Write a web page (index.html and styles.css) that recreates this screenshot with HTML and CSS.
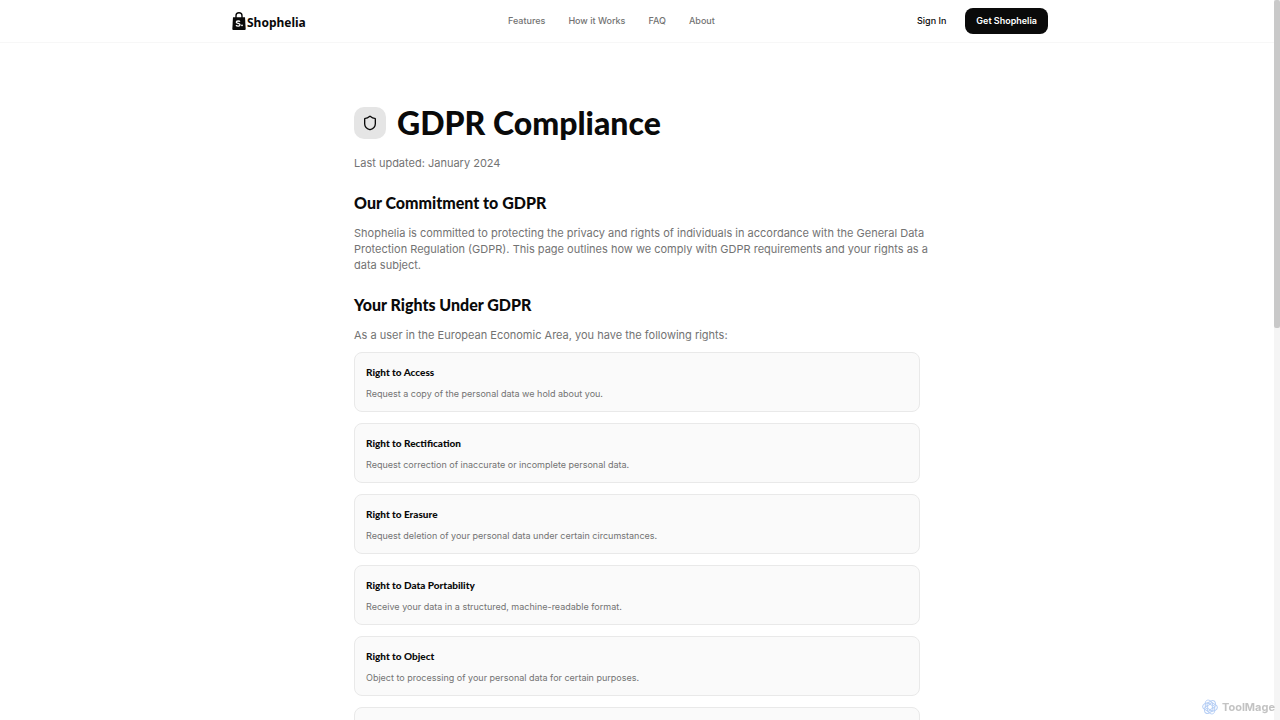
FILE: index.html
```html
<!DOCTYPE html>
<html lang="en">
<head>
<meta charset="utf-8">
<title>GDPR Compliance - Shophelia</title>
<meta name="viewport" content="width=device-width, initial-scale=1">
<link rel="stylesheet" href="styles.css">
</head>
<body>
<header class="header">
  <div class="header-inner">
    <a class="logo" href="#">
      <svg class="logo-mark" viewBox="0 0 14 19" aria-hidden="true">
        <path d="M4 6V3.8a3 3 0 0 1 6 0V6" fill="none" stroke="#0a0a0a" stroke-width="1.4"/>
        <path d="M1 5.2h12L13.700 17a1 1 0 0 1-1 1H1.300a1 1 0 0 1-1-1z" fill="#0a0a0a"/>
        <path d="M8 9.6C7.4 8.9 4.3 8.5 4.3 10.2c0 1.6 3.7.8 3.7 2.6 0 1.7-3.2 1.4-4 .5" fill="none" stroke="#fff" stroke-width="1.3"/>
        <circle cx="10" cy="13.3" r=".9" fill="#fff"/>
      </svg>
      <span>Shophelia</span>
    </a>
    <nav class="nav">
      <a href="#">Features</a>
      <a href="#">How it Works</a>
      <a href="#">FAQ</a>
      <a href="#">About</a>
    </nav>
    <div class="actions">
      <a class="sign-in" href="#">Sign In</a>
      <button class="cta" type="button">Get Shophelia</button>
    </div>
  </div>
</header>
<div class="page">
<main class="content">
  <div class="title-row">
    <span class="title-icon">
      <svg viewBox="0 0 24 24" aria-hidden="true"><path d="M20 13c0 5-3.5 7.5-7.66 8.95a1 1 0 0 1-.67-.01C7.5 20.5 4 18 4 13V6a1 1 0 0 1 1-1c2 0 4.500-1.200 6.240-2.720a1.170 1.170 0 0 1 1.520 0C14.510 3.810 17 5 19 5a1 1 0 0 1 1 1z"/></svg>
    </span>
    <h1>GDPR Compliance</h1>
  </div>
  <p class="updated">Last updated: January 2024</p>
  <section class="section">
    <h2>Our Commitment to GDPR</h2>
    <p class="lead">Shophelia is committed to protecting the privacy and rights of individuals in accordance with the General Data Protection Regulation (GDPR). This page outlines how we comply with GDPR requirements and your rights as a data subject.</p>
  </section>
  <section class="section">
    <h2>Your Rights Under GDPR</h2>
    <p>As a user in the European Economic Area, you have the following rights:</p>
    <div class="cards">
      <article class="card"><h3>Right to Access</h3><p>Request a copy of the personal data we hold about you.</p></article>
      <article class="card"><h3>Right to Rectification</h3><p>Request correction of inaccurate or incomplete personal data.</p></article>
      <article class="card"><h3>Right to Erasure</h3><p>Request deletion of your personal data under certain circumstances.</p></article>
      <article class="card"><h3>Right to Data Portability</h3><p>Receive your data in a structured, machine-readable format.</p></article>
      <article class="card"><h3>Right to Object</h3><p>Object to processing of your personal data for certain purposes.</p></article>
      <article class="card"></article>
    </div>
  </section>
</main>
</div>
<div class="scrollbar"><div class="thumb"></div></div>
<div class="badge">
  <svg viewBox="0 0 24 24" fill="none" stroke="#b7cff5" stroke-width="1.500" aria-hidden="true">
    <path id="petal" d="M12 8 15.500 10V5.500L12 2.500C9 .5 5 2 5 6v7l4 2.300"/>
    <use href="#petal" transform="rotate(60 12 12)"/>
    <use href="#petal" transform="rotate(120 12 12)"/>
    <use href="#petal" transform="rotate(180 12 12)"/>
    <use href="#petal" transform="rotate(240 12 12)"/>
    <use href="#petal" transform="rotate(300 12 12)"/>
  </svg>
  <span>ToolMage</span>
</div>
</body>
</html>
```
FILE: styles.css
```css
* { box-sizing: border-box; }
body {
  margin: 0;
  height: 100vh;
  overflow: hidden;
  background: #fff;
  color: #0a0a0a;
  font-family: Inter, "Liberation Sans", sans-serif;
  font-size: 11px;
  line-height: 16px;
}
h1, h2, h3, p { margin: 0; }
a { color: inherit; text-decoration: none; }
.header { border-bottom: 1px solid #f7f7f7; }
.header-inner {
  display: flex;
  align-items: center;
  justify-content: space-between;
  max-width: 816px;
  height: 42px;
  margin: 0 auto;
}
.logo {
  display: flex;
  align-items: center;
  gap: 1px;
  font-family: "Noto Sans", sans-serif;
  font-size: 12px;
  font-weight: 700;
}
.logo-mark { width: 14px; height: 19px; }
.logo span { padding-top: 4px; }
.nav {
  display: flex;
  gap: 23px;
  color: #737373;
  font-size: 9px;
  font-weight: 500;
}
.actions { display: flex; align-items: center; gap: 19px; font-size: 9px; font-weight: 500; }
.cta {
  height: 26px;
  padding: 0 11px;
  border: 0;
  border-radius: 8px;
  background: #0a0a0a;
  color: #fff;
  font: inherit;
  font-weight: 600;
}
/* Leaves room for the scrollbar rail */
.page { padding-right: 6px; }
.content { max-width: 566px; margin: 0 auto; padding-top: 64px; }
.title-row { display: flex; align-items: center; gap: 11px; }
.title-icon {
  display: grid;
  place-items: center;
  width: 32px;
  height: 32px;
  border-radius: 10px;
  background: #e5e5e5;
}
.title-icon svg { width: 16px; height: 16px; fill: none; stroke: #0a0a0a; stroke-width: 2; }
h1, h2, h3 { font-family: Lato, sans-serif; font-weight: 700; }
h1 { font-size: 32px; line-height: 32px; font-weight: 900; }
.updated { margin-top: 16px; color: #737373; }
.section { margin-top: 20px; color: #737373; }
.section h2 { margin-bottom: 10px; color: #0a0a0a; font-size: 16px; line-height: 24px; font-weight: 900; }
.lead { margin-right: -16px; }
.cards { display: grid; gap: 11px; margin-top: 9px; }
.card {
  min-height: 60px;
  padding: 11px 11px 10px;
  border: 1px solid #e9e9e9;
  border-radius: 8px;
  background: #fafafa;
  font-size: 9px;
}
.card h3 { margin-bottom: 7px; color: #0a0a0a; font-size: 10px; line-height: 16px; font-weight: 900; }
.card p { line-height: 14px; }
.scrollbar { position: fixed; top: 0; right: 0; bottom: 0; width: 6px; background: #f5f5f5; }
.thumb { height: 328px; border-radius: 2px; background: #c9c9c9; }
.badge {
  position: fixed;
  right: 5px;
  bottom: 5px;
  display: flex;
  align-items: center;
  gap: 4px;
  color: #c3c3c3;
  font-size: 11px;
  font-weight: 700;
}
.badge svg { width: 16px; height: 16px; }
```
